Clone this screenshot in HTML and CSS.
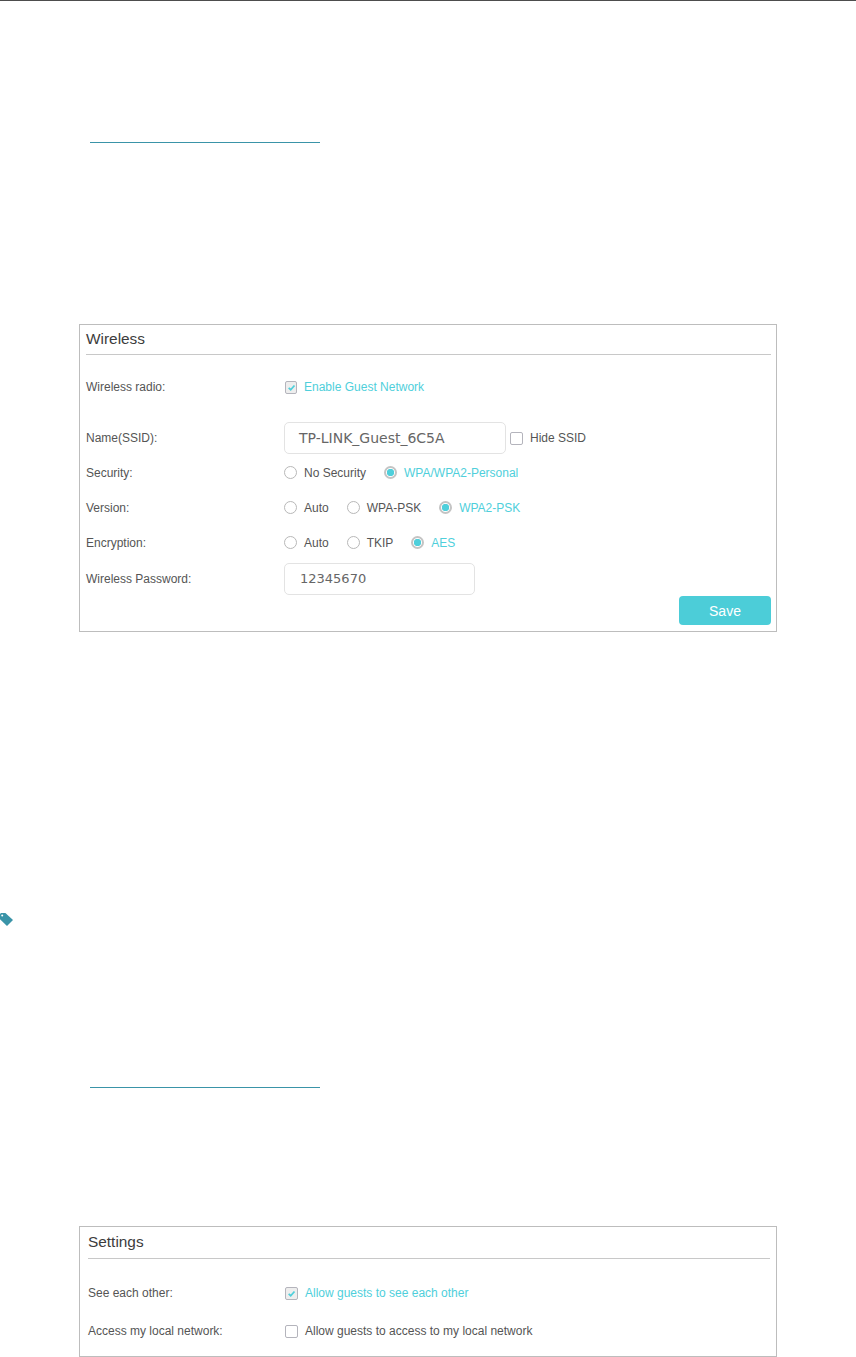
FILE: index.html
```html
<!DOCTYPE html>
<html lang="en">

<head>
    <meta charset="UTF-8">
    <meta name="viewport" content="width=device-width, initial-scale=1.0">
    <title>Guest Network</title>
    <link rel="stylesheet" href="styles.css">
</head>

<body>
    <div class="page-top"></div>

    <div class="short-rule first-rule"></div>

    <!-- Wireless panel -->
    <section class="panel wireless-panel">
        <h2 class="panel-title">Wireless</h2>

        <div class="row row-radio-on">
            <div class="label">Wireless radio:</div>
            <div class="options">
                <span class="check on"><svg viewBox="0 0 14 14"><path d="M3.4 7.4 6 9.8 10.8 4.4"/></svg></span>
                <span class="active-text">Enable Guest Network</span>
            </div>
        </div>

        <div class="row row-name">
            <div class="label">Name(SSID):</div>
            <div class="options">
                <div class="text-box name-box">TP-LINK_Guest_6C5A</div>
                <span class="check hide-check"></span>
                <span>Hide SSID</span>
            </div>
        </div>

        <div class="row row-choice">
            <div class="label">Security:</div>
            <div class="options">
                <span class="radio"></span><span class="opt-text gap-none">No Security</span>
                <span class="radio on"></span><span class="active-text">WPA/WPA2-Personal</span>
            </div>
        </div>

        <div class="row row-choice">
            <div class="label">Version:</div>
            <div class="options">
                <span class="radio"></span><span class="opt-text gap-auto">Auto</span>
                <span class="radio"></span><span class="opt-text gap-psk">WPA-PSK</span>
                <span class="radio on"></span><span class="active-text">WPA2-PSK</span>
            </div>
        </div>

        <div class="row row-choice">
            <div class="label">Encryption:</div>
            <div class="options">
                <span class="radio"></span><span class="opt-text gap-auto">Auto</span>
                <span class="radio"></span><span class="opt-text gap-tkip">TKIP</span>
                <span class="radio on"></span><span class="active-text">AES</span>
            </div>
        </div>

        <div class="row row-password">
            <div class="label">Wireless Password:</div>
            <div class="options">
                <div class="text-box password-box">12345670</div>
            </div>
        </div>

        <div class="panel-foot">
            <button class="save-btn" type="button">Save</button>
        </div>
    </section>

    <div class="tag-line">
        <svg class="tag-icon" viewBox="0 0 13 13"><path d="M0 1 1 0H5.4L13 7 7 13 0 6.2Z"/><circle cx="2.2" cy="2.4" r="1" fill="#fff"/></svg>
    </div>

    <div class="short-rule second-rule"></div>

    <!-- Settings panel -->
    <section class="panel settings-panel">
        <h2 class="panel-title">Settings</h2>

        <div class="row row-see">
            <div class="label">See each other:</div>
            <div class="options">
                <span class="check on"><svg viewBox="0 0 14 14"><path d="M3.4 7.4 6 9.8 10.8 4.4"/></svg></span>
                <span class="active-text">Allow guests to see each other</span>
            </div>
        </div>

        <div class="row row-access">
            <div class="label">Access my local network:</div>
            <div class="options">
                <span class="check"></span>
                <span>Allow guests to access to my local network</span>
            </div>
        </div>
    </section>
</body>

</html>
```

FILE: styles.css
```css
html,
body {
    margin: 0;
    padding: 0;
}

body {
    height: 1357px;
    overflow: hidden;
    background-color: white;
    font-family: 'Liberation Sans', Arial, sans-serif;
    font-size: 12px;
    color: #555;
}

.page-top {
    height: 1px;
    background-color: #4d4d4d;
}

.short-rule {
    width: 230px;
    height: 1px;
    margin-left: 90px;
    background-color: #3a94a8;
}

.first-rule {
    margin-top: 141px;
}

.second-rule {
    margin-top: 161px;
}

.panel {
    box-sizing: border-box;
    width: 698px;
    margin-left: 79px;
    border: 1px solid #bdbdbd;
}

.wireless-panel {
    height: 308px;
    margin-top: 181px;
    padding: 0 5px 0 6px;
}

.settings-panel {
    height: 131px;
    margin-top: 138px;
    padding: 0 6px 0 8px;
}

.panel-title {
    box-sizing: border-box;
    height: 30px;
    margin: 0;
    padding-top: 5px;
    border-bottom: 1px solid #c8c8c8;
    font-size: 15.4px;
    line-height: 18px;
    font-weight: normal;
    color: #3c3c3c;
}

.settings-panel .panel-title {
    height: 32px;
    padding-top: 6px;
}

.row {
    display: flex;
    align-items: center;
}

.label {
    flex: none;
    width: 198px;
}

.settings-panel .label {
    width: 196px;
}

.options {
    display: flex;
    align-items: center;
}

.row-radio-on {
    height: 24px;
    margin-top: 20px;
}

.row-name {
    height: 32px;
    margin-top: 23px;
    margin-bottom: 1px;
}

.row-choice {
    height: 35px;
}

.row-password {
    height: 32px;
    margin-top: 3px;
}

.row-see {
    height: 24px;
    margin-top: 22px;
}

.row-access {
    height: 24px;
    margin-top: 14px;
}

.active-text {
    color: #4fcfdb;
}

.check {
    box-sizing: border-box;
    flex: none;
    width: 13px;
    height: 13px;
    margin-left: 1px;
    margin-right: 7px;
    border: 1px solid #b4b4bc;
    border-radius: 2px;
    background-color: white;
}

.wireless-panel .check.on {
    width: 12px;
}

.check.on {
    background-color: #eeeeee;
}

.check svg {
    display: block;
    width: 11px;
    height: 11px;
    fill: none;
    stroke: #4fcfdb;
    stroke-width: 2.2;
}

.hide-check {
    margin-left: 4px;
}

.radio {
    box-sizing: border-box;
    flex: none;
    width: 13px;
    height: 13px;
    margin-right: 7px;
    border: 1px solid #b8b8b8;
    border-radius: 50%;
    background-color: white;
}

.radio.on {
    border: 2px solid #c4c4c4;
    background: radial-gradient(circle, #4fcfdb 0, #4fcfdb 3.4px, #fff 4px);
}

.gap-none {
    margin-right: 18px;
}

.gap-auto {
    margin-right: 18px;
}

.gap-psk {
    margin-right: 18px;
}

.gap-tkip {
    margin-right: 18px;
}

.text-box {
    box-sizing: border-box;
    height: 32px;
    padding-left: 14px;
    border: 1px solid #e3e3e3;
    border-radius: 5px;
    font-family: 'DejaVu Sans', sans-serif;
    line-height: 30px;
    color: #666;
}

.name-box {
    width: 222px;
    font-size: 14px;
}

.password-box {
    width: 191px;
    padding-left: 15px;
    font-size: 13px;
}

.panel-foot {
    display: flex;
    justify-content: flex-end;
    margin-top: 1px;
}

.save-btn {
    width: 92px;
    height: 29px;
    padding: 0;
    border: none;
    border-radius: 4px;
    background-color: #4ccdd8;
    font-family: 'Liberation Sans', Arial, sans-serif;
    font-size: 14px;
    color: white;
}

.tag-line {
    height: 13px;
    margin-top: 281px;
}

.tag-icon {
    display: block;
    width: 13px;
    height: 13px;
    fill: #3a94a8;
}
```
